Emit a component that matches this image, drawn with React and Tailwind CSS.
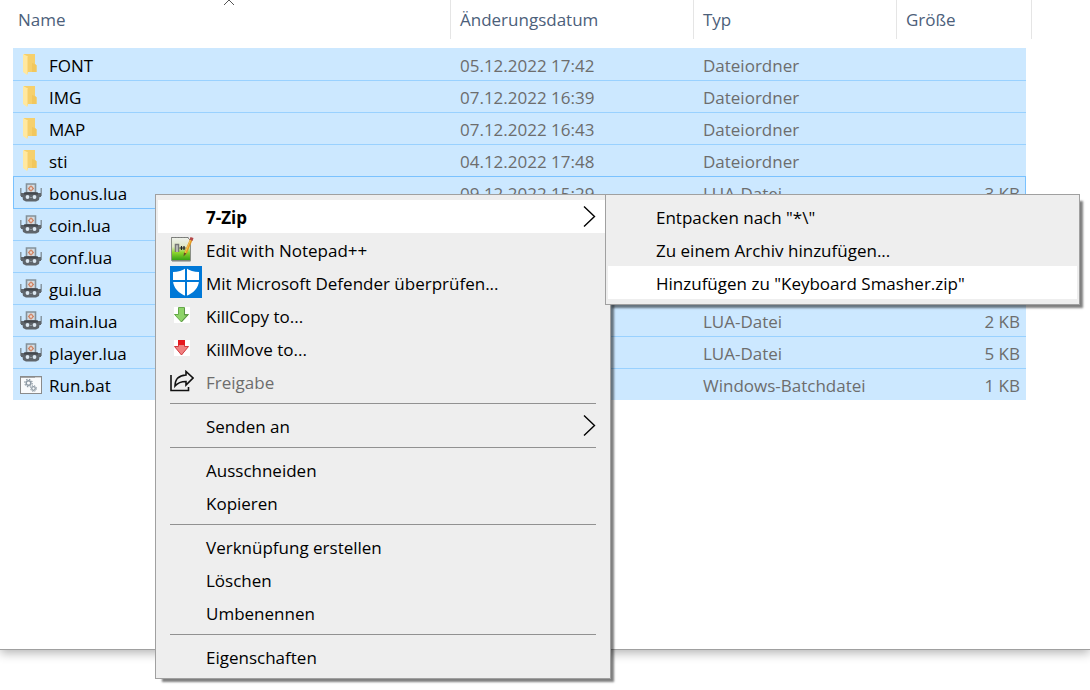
import React, { useState } from "react";

const files = [
  { name: "FONT", date: "05.12.2022 17:42", type: "Dateiordner", icon: "folder" },
  { name: "IMG", date: "07.12.2022 16:39", type: "Dateiordner", icon: "folder" },
  { name: "MAP", date: "07.12.2022 16:43", type: "Dateiordner", icon: "folder" },
  { name: "sti", date: "04.12.2022 17:48", type: "Dateiordner", icon: "folder" },
  { name: "bonus.lua", date: "09.12.2022 15:29", type: "LUA-Datei", size: "3 KB", icon: "lua" },
  { name: "coin.lua", icon: "lua" },
  { name: "conf.lua", icon: "lua" },
  { name: "gui.lua", icon: "lua" },
  { name: "main.lua", type: "LUA-Datei", size: "2 KB", icon: "lua" },
  { name: "player.lua", type: "LUA-Datei", size: "5 KB", icon: "lua" },
  { name: "Run.bat", type: "Windows-Batchdatei", size: "1 KB", icon: "bat" },
];

const FolderIcon = () => (
  <svg width="22" height="22" viewBox="0 0 22 22">
    <path d="M4 0h11v10l1.500 1.500V18H5z" fill="#f6d06c" />
    <path d="M15 10l1.500 1.500V18H12V9z" fill="#f2c75d" />
    <path d="M3 0l5 2.500v15.500l-1 3-4-3z" fill="#ffe8a0" />
    <path d="M7 2.500l1 .5v15l-1 3z" fill="#fbdc88" />
  </svg>
);

const LuaIcon = () => (
  <svg width="22" height="20" viewBox="0 0 22 20">
    <path d="M6.500 9V1h9v8" fill="#d3dce3" stroke="#84919a" strokeWidth="1.600" />
    <path d="M.8 5v8M21.200 5v8" stroke="#7d8a93" strokeWidth="1.300" />
    <circle cx="11" cy="5.500" r="1.900" fill="#e6d9d3" stroke="#d08363" strokeWidth="1.200" />
    <path
      d="M11 2.500v1M11 7.500v1M8 5.500h1M13 5.500h1"
      stroke="#d08363"
      strokeWidth="1.200"
    />
    <path
      d="M1 10h3l2-1h10l2 1h3v4h-1.500l-.5 3-3 1.500H6L3 17l-.5-3H1z"
      fill="#5f656b"
    />
    <path d="M4 10.500h14" stroke="#43474c" strokeWidth="2" />
    <circle cx="7.500" cy="14" r="1.900" fill="#dce8f1" />
    <circle cx="14.500" cy="14" r="1.900" fill="#dce8f1" />
    <path d="M10 15l1-1 1 1" stroke="#8b949b" fill="none" />
  </svg>
);

const BatIcon = () => (
  <svg width="22" height="18" viewBox="0 0 22 18">
    <rect x=".5" y=".5" width="21" height="17" fill="#f9fafb" stroke="#8b8b8b" />
    <path d="M1 1.500h20" stroke="#a5a5a5" />
    <path d="M15.500 1.500h1M17.500 1.500h1M19.500 1.500h1" stroke="#fff" />
    <circle cx="8.500" cy="7" r="2.300" fill="none" stroke="#8f9ba5" strokeWidth="1.500" />
    <circle
      cx="8.500"
      cy="7"
      r="3.700"
      fill="none"
      stroke="#8f9ba5"
      strokeWidth="1.200"
      strokeDasharray="1.500 1.400"
    />
    <circle cx="13.500" cy="12.500" r="1.800" fill="none" stroke="#8f9ba5" strokeWidth="1.300" />
    <circle
      cx="13.500"
      cy="12.500"
      r="3"
      fill="none"
      stroke="#8f9ba5"
      strokeDasharray="1.200 1.200"
    />
  </svg>
);

const fileIcons = { folder: FolderIcon, lua: LuaIcon, bat: BatIcon };

const NotepadIcon = () => (
  <svg width="24" height="26" viewBox="0 0 24 26">
    <defs>
      <linearGradient id="npp" x1="0" y1="0" x2="0" y2="1">
        <stop offset="0" stopColor="#eef0ec" />
        <stop offset=".4" stopColor="#dfe8c4" />
        <stop offset=".65" stopColor="#8fd62f" />
        <stop offset="1" stopColor="#2f9d12" />
      </linearGradient>
    </defs>
    <path d="M1.500 1.500h16l3 3v20h-19z" fill="url(#npp)" stroke="#8a8f86" />
    <path d="M1.500 1.500h17" stroke="#777" strokeDasharray="2 1" />
    <path d="M2 25h18.500" stroke="#777c72" />
    <path d="M5.500 16V8.500h3V16" stroke="#777" strokeWidth="1.500" fill="#c9ccc4" />
    <path d="M9.500 12h6M11.500 10v4M14 10v4" stroke="#222" strokeWidth="1.200" />
    <path d="M21.500 3l-6 14" stroke="#e39a24" strokeWidth="2.800" />
    <path d="M21 3l-6 14" stroke="#f4c553" strokeWidth="1" />
    <path d="M20.500 1l3 1-1 3-3-1.500z" fill="#b4494a" />
    <path d="M14 16.500l2.500 1-3 3z" fill="#6b4a22" />
  </svg>
);

const DefenderIcon = () => (
  <svg width="32" height="32" viewBox="0 0 32 32">
    <path d="M0 0h32v32H0z" fill="#0078d7" />
    <path
      d="M16 2c3.500 2.500 8 4 13 4v8c0 8-6 13.500-13 16C9 27.500 3 22 3 14V6c5 0 9.500-1.500 13-4z"
      fill="#fff"
    />
    <path d="M16 1v30M2 15h28" stroke="#0078d7" strokeWidth="2" />
  </svg>
);

const CopyIcon = () => (
  <svg width="16" height="16" viewBox="0 0 16 16">
    <path d="M0 0h16v16H0z" fill="#fff" />
    <path d="M4.500.5h6v7h4L7.500 15l-7-7.500h4z" fill="#8fd46a" stroke="#64a948" />
    <path d="M10.500 1v7h3l-6 6.500" fill="none" stroke="#5d9348" />
  </svg>
);

const MoveIcon = () => (
  <svg width="16" height="16" viewBox="0 0 16 16">
    <path d="M0 0h16v16H0z" fill="#fff" />
    <path d="M4.500.5h6v6h4L7.500 15l-7-8.500h4z" fill="#f08080" stroke="#cf3a3f" />
    <path d="M4 0h7v5H4z" fill="#e51a20" />
  </svg>
);

const ShareIcon = () => (
  <svg width="24" height="22" viewBox="0 0 24 22" fill="none" stroke="#111" strokeWidth="1.600">
    <path d="M1 5v15.500h17.500V17" />
    <path d="M5 16c0-7 4-10.500 11-11V1.500L23 8l-7 7v-3.500c-5 0-8 1-11 4.500z" />
  </svg>
);

const Chevron = () => (
  <svg width="13" height="21" viewBox="0 0 13 21" fill="none" stroke="#000" strokeWidth="1.400">
    <path d="M1 .5l10.500 10L1 20.500" />
  </svg>
);

const mainMenu = [
  { label: "7-Zip", bold: true, sub: true },
  { label: "Edit with Notepad++", icon: <NotepadIcon /> },
  { label: "Mit Microsoft Defender überprüfen...", icon: <DefenderIcon /> },
  { label: "KillCopy to...", icon: <CopyIcon />, small: true },
  { label: "KillMove to...", icon: <MoveIcon />, small: true },
  { label: "Freigabe", icon: <ShareIcon />, disabled: true },
  null,
  { label: "Senden an", sub: true },
  null,
  { label: "Ausschneiden" },
  { label: "Kopieren" },
  null,
  { label: "Verknüpfung erstellen" },
  { label: "Löschen" },
  { label: "Umbenennen" },
  null,
  { label: "Eigenschaften" },
];

const zipMenu = [
  { label: 'Entpacken nach "*\\"' },
  { label: "Zu einem Archiv hinzufügen..." },
  { label: 'Hinzufügen zu "Keyboard Smasher.zip"' },
];

const Menu = ({ items, active, onHover, label, className }) => (
  <div
    role="menu"
    aria-label={label}
    className={`border border-[#a0a0a0] bg-[#eeeeee] px-[2px] py-[5px] shadow-[5px_5px_2px_-2px_rgba(0,0,0,0.5)] ${className}`}
  >
    {items.map((item, i) =>
      item ? (
        <button
          key={item.label}
          type="button"
          role="menuitem"
          disabled={item.disabled}
          onMouseEnter={() => onHover(item.label)}
          className={`flex h-[33px] w-full items-center pr-3 text-left ${
            active === item.label ? "bg-white" : ""
          } ${item.bold ? "font-bold" : ""} ${
            item.disabled ? "text-[#6d6d6d]" : "text-black"
          }`}
        >
          <span className={`w-12 shrink-0 pb-[2px] ${item.small ? "pl-4" : "pl-3"}`}>
            {item.icon}
          </span>
          <span className="flex-1 pt-[2px] whitespace-nowrap">{item.label}</span>
          {item.sub && <Chevron />}
        </button>
      ) : (
        <hr key={i} className="my-[5px] mr-3 ml-3 border-t border-[#919191]" />
      ),
    )}
  </div>
);

const App = () => {
  const [active, setActive] = useState("7-Zip");
  const [zipActive, setZipActive] = useState(zipMenu[2].label);

  return (
    <div className="relative flex min-h-screen flex-col overflow-hidden bg-white pb-10 font-['Open_Sans','Noto_Sans',sans-serif] text-[17px] leading-6">
      <main className="flex-1 border-b border-[#a0a0a0] bg-white pr-[58px] pl-[13px] shadow-[0_3px_10px_rgba(0,0,0,0.3)]">
        <table className="w-full table-fixed border-separate border-spacing-0 text-left">
          <colgroup>
            <col />
            <col className="w-[243px]" />
            <col className="w-[203px]" />
            <col className="w-[130px]" />
            <col className="w-[6px]" />
          </colgroup>
          <thead className="text-[#4c607a]">
            <tr className="h-[39px]">
              <th className="relative pl-[5px] font-normal">
                Name
                <svg
                  className="absolute top-0 left-1/2 -ml-2"
                  width="12"
                  height="6"
                  viewBox="0 0 12 6"
                >
                  <path d="M1 5l5-5 5 5" fill="none" stroke="#555" />
                </svg>
              </th>
              <th className="border-l border-[#e5e5e5] pl-[9px] font-normal">Änderungsdatum</th>
              <th className="border-l border-[#e5e5e5] pl-[9px] font-normal">Typ</th>
              <th colSpan={2} className="border-x border-[#e5e5e5] pl-[9px] font-normal">
                Größe
              </th>
            </tr>
            <tr className="h-[9px]">
              <td colSpan={5} />
            </tr>
          </thead>
          <tbody className="text-[#6d6d6d]">
            {files.map((file, i) => {
              const Icon = fileIcons[file.icon];
              const focused = file.name === "bonus.lua";
              const line =
                i === 0
                  ? "border-[#cce8ff]"
                  : focused || i === 5
                    ? "border-[#7ac2ff]"
                    : "border-[#99d1ff]";
              const cell = `border-t bg-[#cce8ff] px-0 pt-[2px] pb-0 ${line}`;
              return (
                <tr key={file.name} className="h-8">
                  <td className={`${cell} ${focused ? "border-l" : ""}`}>
                    <div className="flex items-center text-black">
                      <span
                        className={`shrink-0 pb-[2px] ${
                          focused ? "w-[35px] pl-[6px]" : "w-9 pl-[7px]"
                        }`}
                      >
                        <Icon />
                      </span>
                      {file.name}
                    </div>
                  </td>
                  <td className={cell}>
                    <span className="pl-[10px]">{file.date}</span>
                  </td>
                  <td className={cell}>
                    <span className="pl-[10px]">{file.type}</span>
                  </td>
                  <td className={`${cell} ${focused ? "border-r" : ""}`}>
                    <div className={`text-right ${focused ? "pr-[5px]" : "pr-[6px]"}`}>
                      {file.size}
                    </div>
                  </td>
                  <td />
                </tr>
              );
            })}
          </tbody>
        </table>
      </main>

      {/* Context menu with the open 7-Zip submenu */}
      <div className="absolute top-[194px] left-[155px] flex items-start">
        <Menu
          label="Kontextmenü"
          items={mainMenu}
          active={active}
          onHover={setActive}
          className="w-[456px]"
        />
        {active === "7-Zip" && (
          <Menu
            label="7-Zip"
            items={zipMenu}
            active={zipActive}
            onHover={setZipActive}
            className="relative -ml-[6px] w-[475px]"
          />
        )}
      </div>
    </div>
  );
};

export default App;
